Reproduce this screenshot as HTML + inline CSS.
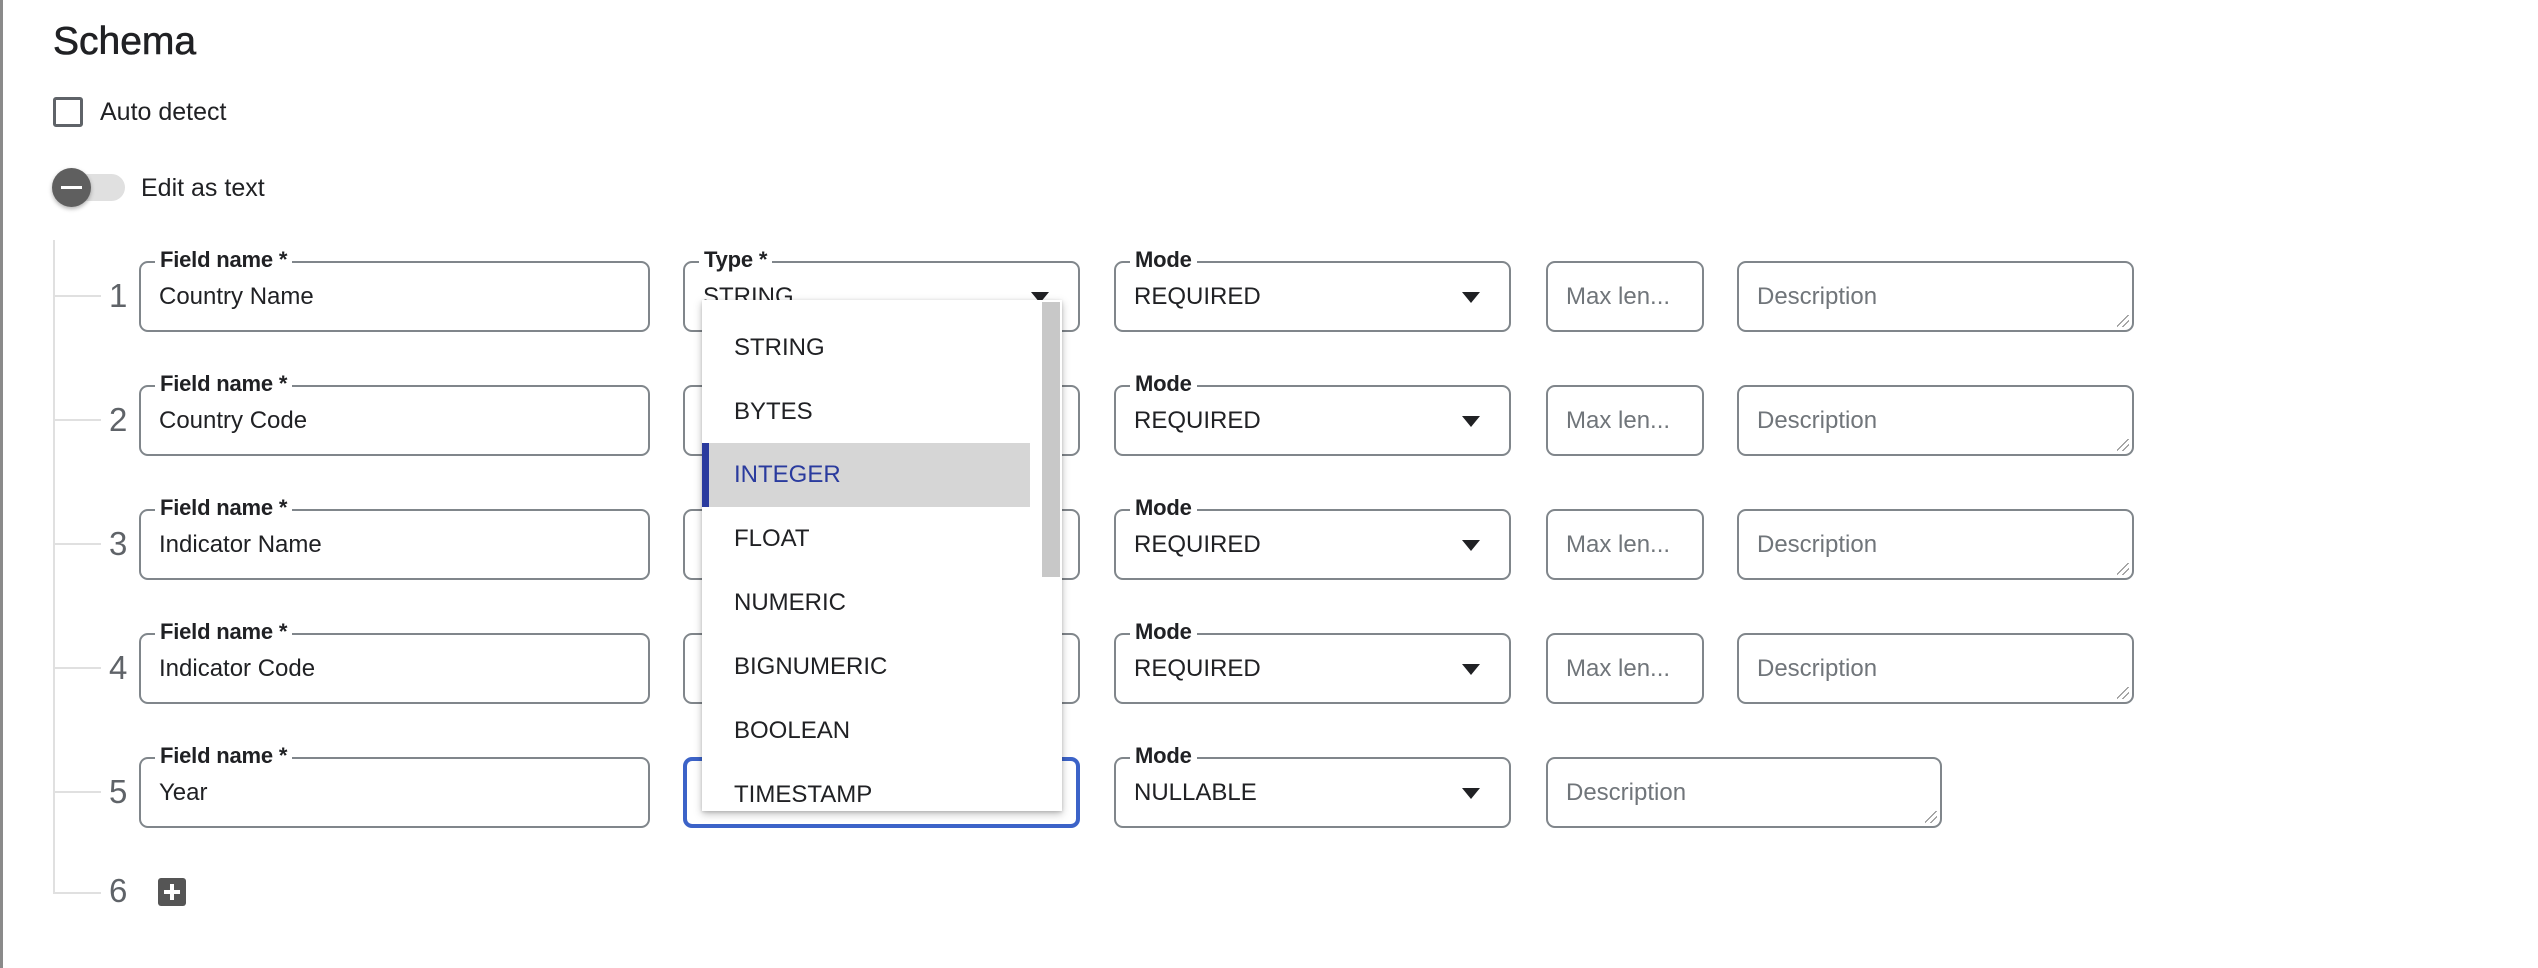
<!DOCTYPE html>
<html><head><meta charset="utf-8"><style>
*{box-sizing:border-box;margin:0;padding:0}
body{width:2538px;height:968px;background:#fff;position:relative;overflow:hidden;font-family:"Liberation Sans",Arial,sans-serif;color:#202124}
.a{position:absolute}
.box{position:absolute;border:2px solid #80868b;border-radius:9px;height:71px}
.lbl{position:absolute;top:-16px;left:14px;background:#fff;padding:0 5px;font-size:22px;font-weight:bold;color:#202124;line-height:26px;letter-spacing:-0.2px}
.val{position:absolute;left:18px;top:20px;font-size:24px;line-height:28px;color:#202124;white-space:nowrap}
.ph{color:#70757a}
.arr{position:absolute;right:29px;top:29px;width:0;height:0;border-left:9px solid transparent;border-right:9px solid transparent;border-top:11px solid #202124}
.rs{position:absolute;right:3px;bottom:3px;width:12px;height:12px;background:linear-gradient(135deg,transparent 45%,#888 45%,#888 52%,transparent 52%,transparent 70%,#888 70%,#888 77%,transparent 77%)}
.num{position:absolute;left:109px;font-size:33px;color:#5f6368;line-height:36px}
.tick{position:absolute;left:53px;width:48px;height:2px;background:#e0e0e0}
.item{position:absolute;left:32px;font-size:24px;line-height:28px;color:#202124}
</style></head><body>
<div class="a" style="left:0;top:0;width:3px;height:968px;background:#8a8a8a"></div>
<div class="a" style="left:53px;top:21px;font-size:39px;line-height:42px;-webkit-text-stroke:0.6px #202124">Schema</div>
<div class="a" style="left:53px;top:97px;width:30px;height:30px;border:3px solid #5f6368;border-radius:3px"></div>
<div class="a" style="left:100px;top:97px;font-size:25px;line-height:30px">Auto detect</div>
<div class="a" style="left:53px;top:174px;width:72px;height:27px;border-radius:14px;background:#e0e0e0"></div>
<div class="a" style="left:52px;top:168px;width:39px;height:39px;border-radius:50%;background:#5f5f5f;box-shadow:0 2px 4px rgba(0,0,0,.3)"></div>
<div class="a" style="left:61px;top:186px;width:21px;height:3px;background:#fff"></div>
<div class="a" style="left:141px;top:173px;font-size:25px;line-height:30px">Edit as text</div>

<div class="a" style="left:53px;top:240px;width:2px;height:654px;background:#e0e0e0"></div>

<div class="tick" style="top:295px"></div><div class="num" style="top:278px">1</div>
<div class="box" style="left:139px;top:261px;width:511px"><div class="lbl">Field name *</div><div class="val">Country Name</div></div>
<div class="box" style="left:683px;top:261px;width:397px"><div class="lbl">Type *</div><div class="val">STRING</div><div class="arr"></div></div>
<div class="box" style="left:1114px;top:261px;width:397px"><div class="lbl">Mode</div><div class="val">REQUIRED</div><div class="arr"></div></div>
<div class="box" style="left:1546px;top:261px;width:158px"><div class="val ph">Max len...</div></div>
<div class="box" style="left:1737px;top:261px;width:397px"><div class="val ph">Description</div><div class="rs"></div></div>

<div class="tick" style="top:419px"></div><div class="num" style="top:402px">2</div>
<div class="box" style="left:139px;top:385px;width:511px"><div class="lbl">Field name *</div><div class="val">Country Code</div></div>
<div class="box" style="left:683px;top:385px;width:397px"></div>
<div class="box" style="left:1114px;top:385px;width:397px"><div class="lbl">Mode</div><div class="val">REQUIRED</div><div class="arr"></div></div>
<div class="box" style="left:1546px;top:385px;width:158px"><div class="val ph">Max len...</div></div>
<div class="box" style="left:1737px;top:385px;width:397px"><div class="val ph">Description</div><div class="rs"></div></div>

<div class="tick" style="top:543px"></div><div class="num" style="top:526px">3</div>
<div class="box" style="left:139px;top:509px;width:511px"><div class="lbl">Field name *</div><div class="val">Indicator Name</div></div>
<div class="box" style="left:683px;top:509px;width:397px"></div>
<div class="box" style="left:1114px;top:509px;width:397px"><div class="lbl">Mode</div><div class="val">REQUIRED</div><div class="arr"></div></div>
<div class="box" style="left:1546px;top:509px;width:158px"><div class="val ph">Max len...</div></div>
<div class="box" style="left:1737px;top:509px;width:397px"><div class="val ph">Description</div><div class="rs"></div></div>

<div class="tick" style="top:667px"></div><div class="num" style="top:650px">4</div>
<div class="box" style="left:139px;top:633px;width:511px"><div class="lbl">Field name *</div><div class="val">Indicator Code</div></div>
<div class="box" style="left:683px;top:633px;width:397px"></div>
<div class="box" style="left:1114px;top:633px;width:397px"><div class="lbl">Mode</div><div class="val">REQUIRED</div><div class="arr"></div></div>
<div class="box" style="left:1546px;top:633px;width:158px"><div class="val ph">Max len...</div></div>
<div class="box" style="left:1737px;top:633px;width:397px"><div class="val ph">Description</div><div class="rs"></div></div>

<div class="tick" style="top:791px"></div><div class="num" style="top:774px">5</div>
<div class="box" style="left:139px;top:757px;width:511px"><div class="lbl">Field name *</div><div class="val">Year</div></div>
<div class="box" style="left:683px;top:757px;width:397px;border:4px solid #3c63c8"></div>
<div class="box" style="left:1114px;top:757px;width:397px"><div class="lbl">Mode</div><div class="val">NULLABLE</div><div class="arr"></div></div>
<div class="box" style="left:1546px;top:757px;width:396px"><div class="val ph">Description</div><div class="rs"></div></div>

<div class="tick" style="top:892px"></div><div class="num" style="top:873px">6</div>
<div class="a" style="left:158px;top:878px;width:28px;height:28px;background:#555;border-radius:3px"></div>
<div class="a" style="left:164px;top:890px;width:16px;height:4px;background:#fff"></div>
<div class="a" style="left:170px;top:884px;width:4px;height:16px;background:#fff"></div>

<div class="a" style="left:702px;top:300px;width:360px;height:511px;background:#fff;box-shadow:0 3px 8px rgba(0,0,0,.25),0 1px 3px rgba(0,0,0,.15);overflow:hidden">
<div class="a" style="left:340px;top:2px;width:18px;height:275px;background:#c8c8c8"></div>
<div class="a" style="left:0;top:143px;width:328px;height:64px;background:#d6d6d6;border-left:7px solid #2a3b9e"></div>
<div class="item" style="top:34px">STRING</div>
<div class="item" style="top:98px">BYTES</div>
<div class="item" style="top:161px;color:#2a3b9e">INTEGER</div>
<div class="item" style="top:225px">FLOAT</div>
<div class="item" style="top:289px">NUMERIC</div>
<div class="item" style="top:353px">BIGNUMERIC</div>
<div class="item" style="top:417px">BOOLEAN</div>
<div class="item" style="top:481px">TIMESTAMP</div>
</div>
</body></html>
